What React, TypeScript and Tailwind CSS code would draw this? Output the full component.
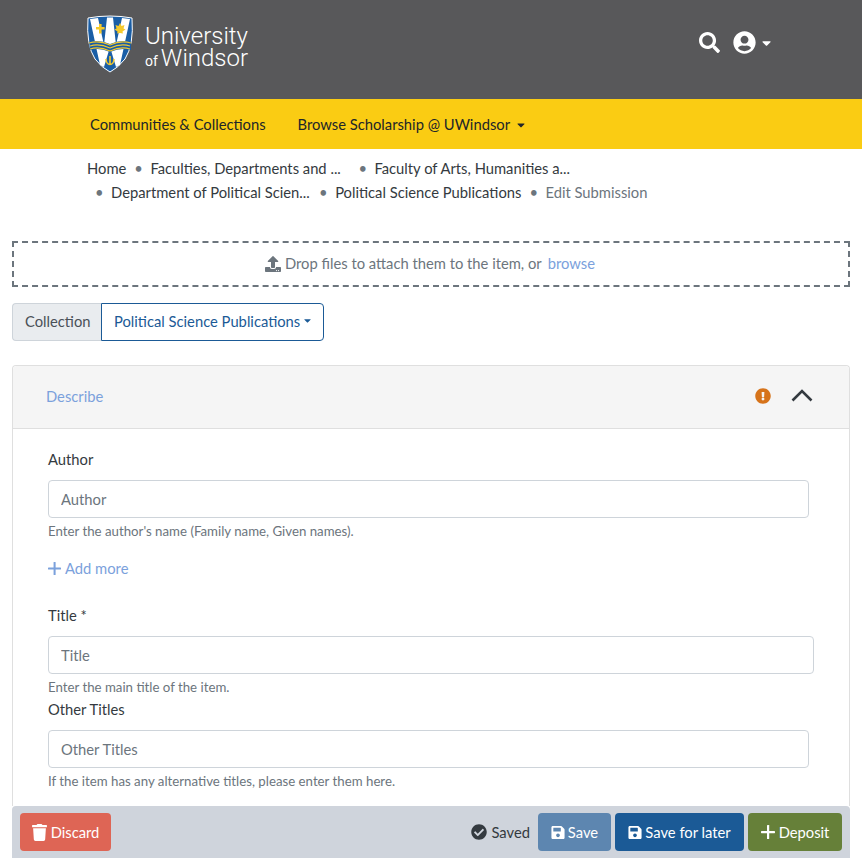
import { FaCaretDown, FaCheckCircle, FaExclamationCircle, FaSave, FaSearch, FaTrash, FaUpload, FaUserCircle } from "react-icons/fa"

function Logo() {
  return (
    <div className="flex items-start">
      <svg width="46" height="58" viewBox="0 0 46 58" className="mt-[15px]">
        <path d="M1 3 Q23 -1 45 3 Q47 30 38 44 Q31 53 23 57 Q15 53 8 44 Q-1 30 1 3Z" fill="#1a5ea6" stroke="#fff" strokeWidth="1" />
        <path d="M3 4 L11 3 L17 30 L20 2.5 L26 2.5 L29 30 L35 3 L43 4 L33 50 L29 52 L23 32 L17 52 L13 50Z" fill="#fff" />
        <path d="M2 27 Q12 24 23 29 Q34 24 44 27 L44 35 Q34 32 23 37 Q12 32 3 35Z" fill="#1a5ea6" />
        <path d="M2 28 Q12 25 23 30 Q34 25 44 28 M3 31 Q12 28 23 33 Q34 28 43 31 M3 34 Q12 31 23 36 Q34 31 43 34" stroke="#f1c72f" strokeWidth="1.1" fill="none" />
        <path d="M12 9 h2.6 v3 h3 v2.6 h-3 v4 h-2.6 v-4 h-3 v-2.6 h3Z" fill="#f4c92c" />
        <path d="M33 8 l1.5 3 3-1 -1 3.4 2 1.2 -3 2 .4 2 -2.9-.6 -2.9 .6 .4-2 -3-2 2-1.2 -1-3.4 3 1Z" fill="#f4c92c" />
        <path d="M23 41 v9 M19 44 a4 5.5 0 0 0 8 0" stroke="#f4c92c" strokeWidth="1.6" fill="none" />
      </svg>
      <div className="ml-[12px] mt-[25px] font-['Roboto',sans-serif] font-light leading-none text-white">
        <div className="text-[24px] leading-[22px]">University</div>
        <div className="flex items-baseline leading-[22px]">
          <span className="mr-[3px] text-[14px] font-normal">of</span>
          <span className="text-[24px]">Windsor</span>
        </div>
      </div>
    </div>
  )
}

function PlusIcon({ className }: { className: string }) {
  return (
    <svg viewBox="0 0 14 14" className={className} fill="currentColor">
      <rect x="6" y="0" width="2.2" height="14" rx="0.6" />
      <rect x="0" y="6" width="14" height="2.2" rx="0.6" />
    </svg>
  )
}

function Crumb({ text, first, wide, muted }: { text: string; first?: boolean; wide?: boolean; muted?: boolean }) {
  return (
    <li className={`flex ${first ? "" : "pl-2"}`}>
      {!first && <span className="pr-[7.5px] text-[#6c757d]">•</span>}
      <span className={`${wide ? "w-[200px]" : ""} ${muted ? "text-[#6c757d]" : "text-[#343a40]"}`}>{text}</span>
    </li>
  )
}

function Field({ label, help, widthClass }: { label: string; help: string; widthClass: string }) {
  return (
    <div>
      <label className="block leading-[21px] text-[#343a40]">{label}</label>
      <input
        placeholder={label.replace(" *", "")}
        className={`mt-[10px] block h-[38px] ${widthClass} rounded border border-[#ced4da] bg-white px-[12px] outline-none placeholder:text-[#6c757d]`}
      />
      <p className="mt-[4px] text-[13.25px] leading-[18px] text-[#6c757d]">{help}</p>
    </div>
  )
}

export default function App() {
  return (
    <div className="flex h-screen flex-col overflow-hidden bg-white font-['Lato',sans-serif] text-[14.75px] text-[#343a40]">
      {/* Header */}
      <header className="flex h-[99px] shrink-0 items-start justify-between bg-[#58585a] pl-[87px] pr-[90px]">
        <Logo />
        <div className="mt-[31px] flex items-center text-white">
          <FaSearch className="h-[21px] w-[21px]" />
          <FaUserCircle className="ml-[13px] h-[23px] w-[23px]" />
          <FaCaretDown className="ml-[5px] h-[14px] w-[11px]" />
        </div>
      </header>

      {/* Nav */}
      <nav className="flex h-[50px] shrink-0 items-center bg-[#facc13] pl-[90px] text-[#212529]">
        <span>Communities &amp; Collections</span>
        <span className="ml-[32px]">Browse Scholarship @ UWindsor</span>
        <FaCaretDown className="ml-[6px] mt-[1px] h-[12px] w-[10px]" />
      </nav>

      {/* Breadcrumbs */}
      <ol className="flex shrink-0 flex-wrap pb-[1px] pl-[87px] pr-[200px] pt-[7px] leading-[24px]">
        <Crumb text="Home" first />
        <Crumb text="Faculties, Departments and ..." wide />
        <Crumb text="Faculty of Arts, Humanities a..." wide />
        <Crumb text="Department of Political Scien..." wide />
        <Crumb text="Political Science Publications" />
        <Crumb text="Edit Submission" muted />
      </ol>

      <main className="flex min-h-0 flex-1 flex-col overflow-hidden px-[12px] pt-[36px]">
        {/* Upload */}
        <div className="flex h-[46px] shrink-0 items-center justify-center border-2 border-dashed border-[#6c757d] pb-[1px] pr-[2px] text-[#6c757d]">
          <FaUpload className="mr-[4px] h-[16px] w-[16px]" />
          <span>Drop files to attach them to the item, or</span>
          <span className="ml-[6px] text-[#7ba1dc]">browse</span>
        </div>

        {/* Collection */}
        <div className="mt-[16px] flex h-[38px] w-fit shrink-0">
          <div className="flex w-[89px] items-center rounded-l border border-r-0 border-[#ced4da] bg-[#e9ecef] pb-[1px] pl-[12px] text-[#495057]">Collection</div>
          <div className="flex items-center rounded-r border border-[#1b5a96] pb-[1px] pl-[12px] pr-[11px] text-[#1b5a96]">
            Political Science Publications
            <FaCaretDown className="mb-[3px] ml-[3px] h-[11px] w-[9px]" />
          </div>
        </div>

        {/* Describe card */}
        <section className="mt-[24px] flex-1 rounded-t border border-b-0 border-[#dfdfdf]">
          <div className="flex h-[63px] items-center justify-between rounded-t border-b border-[#dfdfdf] bg-[#f5f5f5] pb-[1px] pl-[33px] pr-[36px]">
            <span className="text-[#7ba1dc]">Describe</span>
            <div className="flex items-center pb-[1px]">
              <FaExclamationCircle className="h-[16px] w-[16px] text-[#d6731a]" />
              <svg width="22" height="14" viewBox="0 0 22 14" className="mb-[2px] ml-[20px]">
                <path d="M1.5 12.5 L11 3 L20.5 12.5" stroke="#343a40" strokeWidth="2.6" fill="none" />
              </svg>
            </div>
          </div>
          <div className="pl-[35px] pt-[20px]">
            <Field label="Author" help="Enter the author's name (Family name, Given names)." widthClass="w-[761px]" />
            <div className="mt-[17px] flex items-center text-[#7ba1dc]">
              <PlusIcon className="mr-[4px] h-[13px] w-[13px]" />
              <span>Add more</span>
            </div>
            <div className="mt-[26px]">
              <Field label="Title *" help="Enter the main title of the item." widthClass="w-[766px]" />
            </div>
            <div className="mt-[3px]">
              <Field label="Other Titles" help="If the item has any alternative titles, please enter them here." widthClass="w-[761px]" />
            </div>
          </div>
        </section>
      </main>

      {/* Bottom bar */}
      <footer className="mx-[12px] flex h-[52px] shrink-0 items-center justify-between rounded-t bg-[#cfd4dc] px-[8px]">
        <button className="flex h-[38px] w-[91px] items-center justify-center rounded bg-[#de6555] text-white">
          <FaTrash className="mr-[4px] h-[17px] w-[15px]" />
          Discard
        </button>
        <div className="flex items-center">
          <FaCheckCircle className="mr-[4px] h-[16px] w-[16px] text-[#343a40]" />
          <span className="mr-[8px] text-[#343a40]">Saved</span>
          <button className="flex h-[38px] w-[73px] items-center justify-center rounded bg-[#5d86b0] text-white">
            <FaSave className="mr-[3px] h-[15px] w-[14px]" />
            Save
          </button>
          <button className="ml-[4px] flex h-[38px] w-[129px] items-center justify-center rounded bg-[#1b5a96] text-white">
            <FaSave className="mr-[3px] h-[15px] w-[14px]" />
            Save for later
          </button>
          <button className="ml-[4px] flex h-[38px] w-[94px] items-center justify-center rounded bg-[#668039] text-white">
            <PlusIcon className="mr-[4px] h-[14px] w-[14px]" />
            Deposit
          </button>
        </div>
      </footer>
    </div>
  )
}
